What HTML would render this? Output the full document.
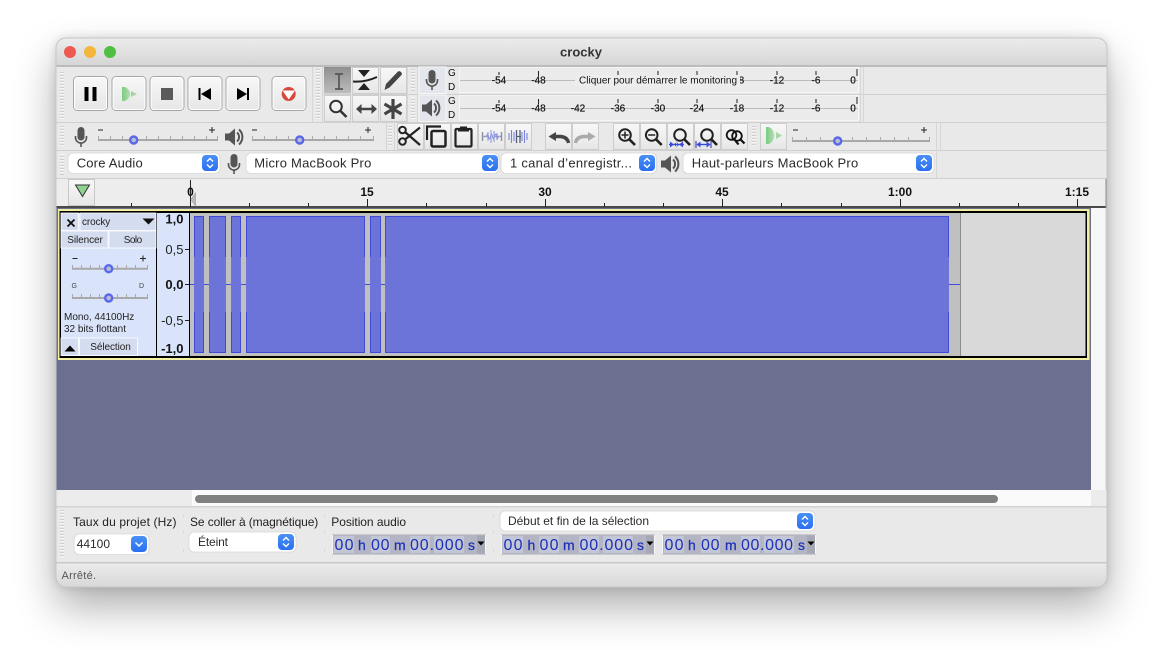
<!DOCTYPE html>
<html lang="fr"><head><meta charset="utf-8"><title>crocky</title>
<style>
html,body{margin:0;padding:0;background:#fff;width:1163px;height:661px;overflow:hidden}
#sh{position:absolute;left:56px;top:38px;width:1051px;height:549px;border-radius:10px;box-shadow:0 20px 42px rgba(0,0,0,.32),0 0 10px rgba(0,0,0,.14)}
svg{position:absolute;left:0;top:0}
text{font-family:"Liberation Sans",sans-serif;fill:#222}
.c{font-size:13px;fill:#2a2a2a}
.c2{font-size:12px;fill:#2a2a2a}
.l{font-size:12px;fill:#222}
.m{font-size:10px;fill:#111;text-anchor:middle;stroke:#111;stroke-width:.2}
.r{font-size:12px;font-weight:bold;fill:#111;text-anchor:middle}
.t{font-size:10px;fill:#222}
.d{font-size:16px;fill:#1c2fb8}
.u{font-size:14px;fill:#1c2fb8;stroke:#1c2fb8;stroke-width:.25}
</style></head><body>
<div id="sh"></div>
<svg width="1163" height="661" viewBox="0 0 1163 661" xmlns="http://www.w3.org/2000/svg">
<defs>
<clipPath id="win"><rect x="56" y="38" width="1051" height="549" rx="10"/></clipPath>
<linearGradient id="tb" x1="0" y1="0" x2="0" y2="1"><stop offset="0" stop-color="#ececec"/><stop offset="1" stop-color="#d5d5d5"/></linearGradient>
<linearGradient id="st" x1="0" y1="0" x2="0" y2="1"><stop offset="0" stop-color="#ececec"/><stop offset="1" stop-color="#d8d8d8"/></linearGradient>
<linearGradient id="btn" x1="0" y1="0" x2="0" y2="1"><stop offset="0" stop-color="#f8f8f8"/><stop offset="1" stop-color="#e6e6e6"/></linearGradient>
<linearGradient id="sel" x1="0" y1="0" x2="0" y2="1"><stop offset="0" stop-color="#8f8f8f"/><stop offset="1" stop-color="#bdbdbd"/></linearGradient>
<linearGradient id="blu" x1="0" y1="0" x2="0" y2="1"><stop offset="0" stop-color="#4a90f5"/><stop offset="1" stop-color="#2a6ff0"/></linearGradient>
<linearGradient id="grn" x1="0" y1="0" x2="1" y2="0"><stop offset="0" stop-color="#7ccb80"/><stop offset="1" stop-color="#b4deb4"/></linearGradient>
<pattern id="grip" width="4" height="3" patternUnits="userSpaceOnUse"><rect width="4" height="1" fill="#cfcfcf"/><rect y="1" width="4" height="1" fill="#f6f6f6"/></pattern>
<g id="tbig"><rect x=".5" y=".5" width="34" height="34" rx="4" fill="url(#btn)" stroke="#a6a6a6"/><rect x="1.5" y="1.5" width="32" height="32" rx="3" fill="none" stroke="#fff"/></g>
<g id="tool"><rect x=".5" y=".5" width="26" height="26" fill="url(#btn)" stroke="#cdcdcd"/></g>
<g id="mic" fill="none" stroke="#555"><rect x="-3.5" y="-10" width="7" height="13.5" rx="3.5" fill="#555" stroke="none"/><path d="M-5.500 -1v1.500a5.500 5.500 0 0 0 11 0v-1.500M0 6v4" stroke-width="1.600"/></g>
<g id="spk"><path d="M-9 -3.500h4l6 -5v17l-6 -5h-4z" fill="#555"/><path d="M3 -4.500a6 6 0 0 1 0 9M5 -7.500a10 10 0 0 1 0 15" fill="none" stroke="#555" stroke-width="2"/></g>
<g id="step"><rect width="16" height="16" rx="4" fill="url(#blu)"/><path d="M5 6.500l3 -3 3 3M5 9.500l3 3 3 -3" fill="none" stroke="#fff" stroke-width="1.400"/></g>
<g id="thumb"><circle r="3.500" fill="#b9bcd8" stroke="#5868e8" stroke-width="2.400"/></g>
<g id="lens"><circle cx="0" cy="0" r="5.800" fill="none" stroke="#222" stroke-width="2"/><path d="M4.200 4.200L10 10" stroke="#222" stroke-width="2.600"/></g>
<g id="mtr"><rect x="459.500" y="0.500" width="399" height="25" fill="#ebebeb" stroke="#f5f5f5"/><path d="M460 13.500H858" stroke="#bcbcbc"/><path d="M499 5v3M538.500 4v5M618 4v4M658 4v4M697 4v4M737 4v4M777 4v4M816 4v4M857 2v7" stroke="#222"/></g>
<g id="arr"><path d="M0 0h7l-3.500 4z" fill="#000"/></g>
</defs>

<g clip-path="url(#win)">
<rect x="56" y="38" width="1051" height="549" fill="#e9e9e9"/>
<!-- title -->
<rect x="56" y="38" width="1051" height="28" fill="url(#tb)"/>
<rect x="56" y="65" width="1051" height="2" fill="#bcbcbc"/>
<circle cx="70" cy="52" r="6" fill="#ee5a52"/><circle cx="90" cy="52" r="6" fill="#f5b63c"/><circle cx="110" cy="52" r="6" fill="#4fc041"/>
<text x="581" y="56.500" text-anchor="middle" style="font-size:13px;font-weight:bold;fill:#333">crocky</text>

<!-- toolbar lines -->
<path d="M56 122.500H1107M56 150.500H1107M56 178.500H1107M322 94.500H1107" stroke="#d0d0d0"/>
<path d="M312.500 67V122M322.500 67V122M407.500 67V122M417.500 67V122M858.500 67V122M860.500 67V122M863.500 67V122M386.500 123V150M394.500 123V150M936.500 123V178M940.500 123V150" stroke="#d6d6d6"/>
<rect x="60" y="71" width="4" height="48" fill="url(#grip)"/>
<rect x="316" y="69" width="4" height="51" fill="url(#grip)"/>
<rect x="411" y="69" width="4" height="22" fill="url(#grip)"/>
<rect x="411" y="97" width="4" height="22" fill="url(#grip)"/>
<rect x="60" y="126" width="4" height="21" fill="url(#grip)"/>
<rect x="60" y="154" width="4" height="21" fill="url(#grip)"/>
<rect x="388" y="126" width="4" height="21" fill="url(#grip)"/>
<rect x="752" y="126" width="4" height="21" fill="url(#grip)"/>

<!-- transport -->
<use href="#tbig" x="73" y="76"/><use href="#tbig" x="111.500" y="76"/><use href="#tbig" x="149.500" y="76"/><use href="#tbig" x="187.500" y="76"/><use href="#tbig" x="225.500" y="76"/><use href="#tbig" x="271.500" y="76"/>
<path d="M84.500 87h4v14h-4zM92.500 87h4v14h-4z" fill="#000"/>
<path d="M122 87h2.500q4.500 1 6 7q-1.500 6 -6 7h-2.500z" fill="url(#grn)"/><path d="M131 91l6 3l-6 3z" fill="#a6d6a6"/>
<rect x="161" y="88" width="12" height="12" fill="#5a5a5a"/>
<path d="M198.500 88h2v12h-2zM211 88v12l-10 -6z" fill="#000"/>
<path d="M247 88h2v12h-2zM237 88v12l10 -6z" fill="#000"/>
<circle cx="288.700" cy="94" r="7" fill="#d6493c"/><path d="M282.500 90.500h12.500l-6.250 9z" fill="#fff"/>

<!-- tools -->
<rect x="324" y="67" width="27" height="26.500" fill="url(#sel)"/>
<use href="#tool" x="352" y="67"/><use href="#tool" x="380" y="67"/><use href="#tool" x="324" y="95"/><use href="#tool" x="352" y="95"/><use href="#tool" x="380" y="95"/>
<path d="M335 74h8M339 74v15M335 89h8" fill="none" stroke="#555" stroke-width="1.700"/>
<path d="M358 70h12l-6 7zM358 90h12l-6 -7z" fill="#222"/><path d="M353 81.500q12 1 24 -4.500" fill="none" stroke="#222" stroke-width="2"/>
<path d="M384.500 90l1.500 -6 12 -12.500q1.500 -1 3 .5t.5 3l-12 12.500z" fill="#444"/>
<circle cx="336" cy="106.500" r="5.800" fill="none" stroke="#333" stroke-width="2"/><path d="M340.500 111l6 6" stroke="#333" stroke-width="2.600"/>
<path d="M358 109h17" stroke="#444" stroke-width="2.400"/><path d="M356 109l5.500 -5v10zM377 109l-5.500 -5v10z" fill="#444"/>
<path d="M393 99v20M384.500 104l17 10M384.500 114l17 -10" stroke="#444" stroke-width="3.200"/>

<!-- meters -->
<rect x="419" y="67" width="27" height="26.500" fill="#e3e6ec" stroke="#f6f6f6"/>
<rect x="419" y="95" width="27" height="26.500" fill="#e3e6ec" stroke="#f6f6f6"/>
<use href="#mic" x="432" y="80"/><use href="#spk" x="431" y="108"/>
<text x="448" y="76" class="t" style="fill:#111">G</text><text x="448" y="90" class="t" style="fill:#111">D</text>
<text x="448" y="104" class="t" style="fill:#111">G</text><text x="448" y="118" class="t" style="fill:#111">D</text>
<use href="#mtr" y="67"/><use href="#mtr" y="95"/>
<g>
<text x="499" y="83.500" class="m">-54</text><text x="538.500" y="83.500" class="m">-48</text><text x="737" y="83.500" class="m">-18</text><text x="777" y="83.500" class="m">-12</text><text x="816" y="83.500" class="m">-6</text><text x="853" y="83.500" class="m">0</text>
<rect x="575" y="75" width="165" height="11" fill="#ededed"/>
<text x="579" y="83.500" class="t" style="fill:#111" textLength="158" lengthAdjust="spacing">Cliquer pour démarrer le monitoring</text>
<text x="499" y="111.500" class="m">-54</text><text x="538.500" y="111.500" class="m">-48</text><text x="578" y="111.500" class="m">-42</text><text x="618" y="111.500" class="m">-36</text><text x="658" y="111.500" class="m">-30</text><text x="697" y="111.500" class="m">-24</text><text x="737" y="111.500" class="m">-18</text><text x="777" y="111.500" class="m">-12</text><text x="816" y="111.500" class="m">-6</text><text x="853" y="111.500" class="m">0</text>
</g>

<!-- row 2: sliders -->
<use href="#mic" x="81" y="137"/>
<path d="M98 140h120M252 140h122M792 141h138" stroke="#a8a8a8" stroke-width="2"/>
<path d="M98.500 136v3M110.500 136v3M122.500 136v3M146.500 136v3M158.500 136v3M170.500 136v3M182.500 136v3M194.500 136v3M206.500 136v3M217.500 136v3M252.500 136v3M264.500 136v3M276.500 136v3M288.500 136v3M312.500 136v3M324.500 136v3M336.500 136v3M348.500 136v3M360.500 136v3M373.500 136v3M792.500 137v3M806.500 137v3M820.500 137v3M852.500 137v3M866.500 137v3M880.500 137v3M894.500 137v3M908.500 137v3M929.500 137v3" stroke="#aaa"/>
<path d="M98 130h5M209 130h6M212 127v6M252 130h5M365 130h6M368 127v6M793 130h5M921 130h6M924 127v6" stroke="#222"/>
<use href="#thumb" x="133.700" y="140"/><use href="#thumb" x="299.700" y="140"/><use href="#thumb" x="837.700" y="141"/>
<use href="#spk" x="234" y="137"/>

<!-- edit tools -->
<use href="#tool" x="397" y="123"/><use href="#tool" x="424" y="123"/><use href="#tool" x="451" y="123"/><use href="#tool" x="478" y="123"/><use href="#tool" x="505" y="123"/>
<use href="#tool" x="545" y="123"/><use href="#tool" x="572" y="123"/>
<use href="#tool" x="613" y="123"/><use href="#tool" x="640" y="123"/><use href="#tool" x="667" y="123"/><use href="#tool" x="694" y="123"/><use href="#tool" x="721" y="123"/><use href="#tool" x="760" y="123"/>
<circle cx="402.500" cy="130" r="3.300" fill="none" stroke="#222" stroke-width="2"/><circle cx="402.500" cy="141.500" r="3.300" fill="none" stroke="#222" stroke-width="2"/><path d="M405 132l15 13M405 139.500l15 -12" stroke="#222" stroke-width="2.200"/>
<path d="M427 140v-13.500h14" fill="none" stroke="#222" stroke-width="2.200"/><rect x="431.500" y="131" width="14" height="15.500" rx="1.500" fill="none" stroke="#222" stroke-width="2.500"/>
<rect x="455.500" y="129" width="16" height="17.500" rx="1" fill="none" stroke="#222" stroke-width="2.200"/><path d="M460 126.500h7v2.500h2v2.500h-11v-2.500h2z" fill="#222"/>
<path d="M482 136.500h7M495 136.500h7" stroke="#9a9fbc" stroke-width="1.400"/><path d="M482.500 132v9M501.500 132v9" stroke="#8d91a6" stroke-width="1.400"/><path d="M486.500 136.500q1 -5 2 0t2 0 2 0 2 0 2 0t1.500 0M488 132v9M491 130v13M494 131v11M497 133v7" fill="none" stroke="#8b93dc" stroke-width="1"/>
<path d="M509 133v7M511.500 130v13M514 132v9M522 132v9M524.500 130v13M527 133v7" stroke="#7882e4" stroke-width="1.100"/><path d="M516.500 130v13M520 130v13" stroke="#555c78" stroke-width="1.300"/><path d="M516 136.500h5" stroke="#555c78" stroke-width="1.200"/>
<path d="M568.500 143q-1 -6 -8 -6.500h-5" fill="none" stroke="#444" stroke-width="3.400"/><path d="M548.500 136.500l7.500 -4.500v9z" fill="#444"/>
<path d="M575.500 143q1 -6 8 -6.500h5" fill="none" stroke="#aaa" stroke-width="3.400"/><path d="M595.500 136.500l-7.500 -4.500v9z" fill="#aaa"/>
<use href="#lens" x="625" y="135"/><path d="M621.500 135h7M625 131.500v7" stroke="#222" stroke-width="1.500"/>
<use href="#lens" x="651.700" y="135"/><path d="M648.200 135h7" stroke="#222" stroke-width="1.500"/>
<use href="#lens" x="680" y="135"/><path d="M669 144.500h15" stroke="#3a4ad8" stroke-width="1.400"/><path d="M674 144.500l-4 -3v6zM679 144.500l4 -3v6zM674 144.500l3 -3v6zM679 144.500l-3 -3v6z" fill="#3a4ad8"/>
<use href="#lens" x="707" y="135"/><path d="M697 144.500h13" stroke="#3a4ad8" stroke-width="1.400"/><path d="M696 141v7M711 141v7" stroke="#3a4ad8" stroke-width="1.200"/><path d="M696.500 144.500l4 -3v6zM710.500 144.500l-4 -3v6z" fill="#3a4ad8"/>
<circle cx="731.500" cy="135" r="4.800" fill="none" stroke="#111" stroke-width="1.800"/><circle cx="737" cy="136" r="4.800" fill="none" stroke="#111" stroke-width="1.800"/><path d="M734.500 139.500l4 5M740.500 139.500l4 4" stroke="#111" stroke-width="2.200"/>
<path d="M766 127h2.500q4.500 1 6 8.500q-1.500 7.500 -6 8.500h-2.500z" fill="url(#grn)"/><path d="M776 132l6 3.500l-6 3.500z" fill="#a6d6a6"/>

<!-- row 3 combos -->
<g fill="#fff" stroke="#d6d6d6" stroke-width=".8">
<rect x="68" y="153" width="152" height="20.500" rx="5"/>
<rect x="246" y="153" width="253" height="20.500" rx="5"/>
<rect x="501" y="153" width="155.500" height="20.500" rx="5"/>
<rect x="683" y="153" width="251" height="20.500" rx="5"/>
<rect x="500" y="511" width="315" height="20" rx="5"/>
<rect x="74" y="534" width="75" height="20.500" rx="5"/>
<rect x="189" y="532" width="107" height="20" rx="5"/>
</g>
<use href="#step" x="202" y="155"/><use href="#step" x="482" y="155"/><use href="#step" x="639" y="155"/><use href="#step" x="916" y="155"/><use href="#step" x="797" y="513"/><use href="#step" x="278" y="534"/>
<rect x="131" y="536" width="16" height="16" rx="4" fill="url(#blu)"/><path d="M135.500 542.500l3.500 3.500 3.500 -3.500" fill="none" stroke="#fff" stroke-width="1.500"/>
<text x="76.700" y="167.500" class="c" textLength="66" lengthAdjust="spacing">Core Audio</text>
<text x="254.300" y="167.500" class="c" textLength="117" lengthAdjust="spacing">Micro MacBook Pro</text>
<text x="510" y="167.500" class="c" textLength="122" lengthAdjust="spacing">1 canal d’enregistr...</text>
<text x="691.700" y="167.500" class="c" textLength="166.500" lengthAdjust="spacing">Haut-parleurs MacBook Pro</text>
<use href="#mic" x="234" y="164"/><use href="#spk" x="670" y="164"/>

<!-- ruler -->
<rect x="56" y="179" width="1050" height="28" fill="#ededed"/>
<rect x="56" y="206" width="1050" height="2" fill="#4a4a4a"/>
<rect x="1105.500" y="179" width="1.500" height="29" fill="#8a8a8a"/>
<rect x="68.500" y="179.500" width="26" height="26" fill="url(#btn)" stroke="#c8c8c8"/>
<path d="M75.500 185h14l-7 11.500z" fill="#8fd08f" stroke="#333" stroke-width="1"/>
<path d="M190.500 180v27M131.500 203v4M249.500 203v4M308.500 203v4M367.500 199v8M426.500 203v4M486.500 203v4M545.500 199v8M604.500 203v4M663.500 203v4M722.500 199v8M781.500 203v4M841.500 203v4M900.500 199v8M959.500 203v4M1018.500 203v4M1077.500 199v8" stroke="#222"/>
<path d="M195.500 193v13l-4.500 -6.500z" fill="#bbb" stroke="#999" stroke-width=".6"/>
<text x="190.500" y="196" class="r">0</text><text x="367" y="196" class="r">15</text><text x="545" y="196" class="r">30</text><text x="722" y="196" class="r">45</text><text x="900" y="196" class="r">1:00</text><text x="1077" y="196" class="r">1:15</text>

<!-- track area -->
<rect x="56" y="208" width="1035" height="282" fill="#6b7090"/>
<rect x="1091" y="208" width="16" height="282" fill="#f7f7f7"/>
<rect x="1105.500" y="208" width="1.500" height="282" fill="#d0d0d0"/>
<rect x="58" y="209" width="1031.500" height="151" fill="#f4f0a2"/>
<rect x="59.500" y="211" width="1027.500" height="147" fill="#000"/>
<!-- control panel -->
<rect x="61" y="213" width="95" height="143" fill="#d9e3fa"/>
<g fill="#d4dcef" stroke="#fff" stroke-width=".8">
<rect x="61" y="213" width="17.500" height="17.500"/><rect x="80" y="213" width="76" height="17.500"/>
<rect x="61" y="231" width="47" height="17"/><rect x="109" y="231" width="47" height="17"/>
<rect x="61" y="338" width="17.500" height="17.500"/><rect x="79.500" y="338" width="58" height="17.500"/>
</g>
<path d="M67.500 219.500l7 7M74.500 219.500l-7 7" stroke="#111" stroke-width="1.800"/>
<path d="M142.500 218.500h12l-6 6z" fill="#111"/>
<path d="M64.500 351.500h11l-5.500 -6z" fill="#000"/>
<text x="82" y="225" class="t" textLength="28.300" lengthAdjust="spacing">crocky</text>
<text x="67.300" y="243" class="t" textLength="35.500" lengthAdjust="spacing">Silencer</text>
<text x="123.700" y="243" class="t" textLength="18.500" lengthAdjust="spacing">Solo</text>
<text x="90.300" y="350" class="t" textLength="40.500" lengthAdjust="spacing">Sélection</text>
<text x="64" y="320" class="t" textLength="70.300" lengthAdjust="spacing">Mono, 44100Hz</text>
<text x="64" y="332" class="t" textLength="62" lengthAdjust="spacing">32 bits flottant</text>
<path d="M72 268.700h76M72 298h76" stroke="#a8a8a8" stroke-width="2"/>
<path d="M72.500 265v3M81.500 265v3M90.500 265v3M99.500 265v3M117.500 265v3M126.500 265v3M135.500 265v3M147.500 265v3M72.500 294v3M81.500 294v3M90.500 294v3M99.500 294v3M117.500 294v3M126.500 294v3M135.500 294v3M147.500 294v3" stroke="#aaa"/>
<path d="M72.500 258.500h5M140 258.500h6M143 255.500v6" stroke="#222"/>
<use href="#thumb" x="108.700" y="268.700"/><use href="#thumb" x="108.700" y="298"/>
<text x="71.500" y="288" style="font-size:7px;fill:#444">G</text><text x="139" y="288" style="font-size:7px;fill:#444">D</text>
<!-- vertical ruler -->
<rect x="157" y="213" width="32" height="143" fill="#d9e3fa"/>
<text x="183.500" y="223.500" text-anchor="end" style="font-size:13px;font-weight:bold;fill:#111">1,0</text>
<text x="183.500" y="254" text-anchor="end" style="font-size:13px;fill:#222">0,5</text>
<text x="183.500" y="289" text-anchor="end" style="font-size:13px;font-weight:bold;fill:#111">0,0</text>
<text x="183.500" y="325" text-anchor="end" style="font-size:13px;fill:#222">-0,5</text>
<text x="183.500" y="353" text-anchor="end" style="font-size:13px;font-weight:bold;fill:#111">-1,0</text>
<path d="M185 249.500h4M185 284.500h4M185 320.500h4" stroke="#222"/>
<!-- waveform -->
<rect x="190" y="213" width="770" height="143" fill="#c0c0c0"/>
<rect x="961" y="213" width="124.500" height="143" fill="#d9d9d9"/>
<rect x="960" y="213" width="1" height="143" fill="#8c8c8c"/>
<path d="M190 284.500H960" stroke="#3f4fdc"/>
<g fill="#6c73d9">
<rect x="194" y="216" width="10" height="137"/><rect x="209" y="216" width="17" height="137"/><rect x="231" y="216" width="10" height="137"/><rect x="246" y="216" width="119" height="137"/><rect x="370" y="216" width="11" height="137"/><rect x="385" y="216" width="564" height="137"/>
</g>
<path d="M194 216.500h10M209 216.500h17M231 216.500h10M246 216.500h119M370 216.500h11M385 216.500h564M194 352.500h10M209 352.500h17M231 352.500h10M246 352.500h119M370 352.500h11M385 352.500h564M194.500 216v41M194.500 312v41M203.500 216v41M203.500 312v41M209.500 216v41M209.500 312v41M225.500 216v41M225.500 312v41M231.500 216v41M231.500 312v41M240.500 216v41M240.500 312v41M246.500 216v41M246.500 312v41M364.500 216v41M364.500 312v41M370.500 216v41M370.500 312v41M380.500 216v41M380.500 312v41M385.500 216v41M385.500 312v41M948.500 216v41M948.500 312v41" stroke="#3f4ad8" fill="none"/>

<!-- scrollbar -->
<rect x="56" y="490" width="136" height="16" fill="#ececec"/>
<rect x="192" y="490" width="899" height="16" fill="#fafafa"/>
<rect x="1091" y="490" width="16" height="16" fill="#ececec"/>
<rect x="195" y="495" width="803" height="8" rx="4" fill="#808080"/>
<!-- bottom -->
<rect x="56" y="506" width="1051" height="1.500" fill="#d2d2d2"/>
<rect x="60" y="510" width="4" height="48" fill="url(#grip)"/>
<text x="73" y="526" class="l" textLength="103.500" lengthAdjust="spacing">Taux du projet (Hz)</text>
<text x="190" y="526" class="l" textLength="128.300" lengthAdjust="spacing">Se coller à (magnétique)</text>
<text x="331.300" y="526" class="l" textLength="74.700" lengthAdjust="spacing">Position audio</text>
<text x="76.700" y="548" class="c2" textLength="33.300" lengthAdjust="spacing">44100</text>
<text x="198" y="546" class="c2" textLength="30" lengthAdjust="spacing">Éteint</text>
<text x="508" y="525" class="c2" textLength="141" lengthAdjust="spacing">Début et fin de la sélection</text>
<path d="M183.500 515v3M183.500 530v3M183.500 549v3M324.500 515v3M324.500 530v3M324.500 549v3M493.500 515v3M493.500 530v3M493.500 549v3" stroke="#d8d8d8"/>

<!-- time fields -->
<g fill="#b3b5c4" stroke="#f7f7f7"><rect x="332.500" y="534.500" width="153" height="20"/><rect x="501.500" y="534.500" width="153" height="20"/><rect x="662.500" y="534.500" width="153" height="20"/></g>
<path d="M332 534.500H486M332 554.500H486M501 534.500H655M501 554.500H655M662 534.500H816M662 554.500H816" stroke="#9d9d9d" stroke-width=".6"/>
<g fill="#c3c6d5">
<rect x="334" y="536" width="20" height="17"/><rect x="371" y="536" width="19" height="17"/><rect x="410" y="536" width="20" height="17"/><rect x="434" y="536" width="30" height="17"/>
<rect x="503" y="536" width="20" height="17"/><rect x="539" y="536" width="20" height="17"/><rect x="579" y="536" width="20" height="17"/><rect x="603" y="536" width="30" height="17"/>
<rect x="664" y="536" width="20" height="17"/><rect x="701" y="536" width="19" height="17"/><rect x="741" y="536" width="19" height="17"/><rect x="764" y="536" width="30" height="17"/>
</g>
<text x="334.500" y="550" class="d" textLength="19" lengthAdjust="spacing">00</text><text x="358" y="550" class="u" textLength="8" lengthAdjust="spacing">h</text><text x="371" y="550" class="d" textLength="18.500" lengthAdjust="spacing">00</text><text x="394" y="550" class="u" textLength="12" lengthAdjust="spacing">m</text><text x="410" y="550" class="d" textLength="53.500" lengthAdjust="spacing">00.000</text><text x="468" y="550" class="u" textLength="6.500" lengthAdjust="spacing">s</text>
<text x="503.500" y="550" class="d" textLength="19" lengthAdjust="spacing">00</text><text x="527.500" y="550" class="u" textLength="7" lengthAdjust="spacing">h</text><text x="539.500" y="550" class="d" textLength="19" lengthAdjust="spacing">00</text><text x="563" y="550" class="u" textLength="12" lengthAdjust="spacing">m</text><text x="579.500" y="550" class="d" textLength="53.500" lengthAdjust="spacing">00.000</text><text x="637" y="550" class="u" textLength="6.500" lengthAdjust="spacing">s</text>
<text x="664.500" y="550" class="d" textLength="19" lengthAdjust="spacing">00</text><text x="688" y="550" class="u" textLength="7" lengthAdjust="spacing">h</text><text x="701" y="550" class="d" textLength="18.500" lengthAdjust="spacing">00</text><text x="725" y="550" class="u" textLength="11.500" lengthAdjust="spacing">m</text><text x="741" y="550" class="d" textLength="52" lengthAdjust="spacing">00.000</text><text x="798" y="550" class="u" textLength="6.500" lengthAdjust="spacing">s</text>
<g fill="#a6a8b4"><rect x="477" y="535.500" width="8" height="18"/><rect x="646" y="535.500" width="8" height="18"/><rect x="807" y="535.500" width="8" height="18"/></g>
<use href="#arr" x="477.500" y="541.500"/><use href="#arr" x="646.500" y="541.500"/><use href="#arr" x="807.500" y="541.500"/>

<!-- status -->
<rect x="56" y="562" width="1051" height="25" fill="url(#st)"/>
<rect x="56" y="562" width="1051" height="1.500" fill="#c8c8c8"/>
<text x="61.500" y="579" style="font-size:11px;fill:#555" textLength="34.500" lengthAdjust="spacing">Arrêté.</text>
</g>
<rect x="56" y="38" width="1051" height="549" rx="10" fill="none" stroke="#c6c6c6" stroke-width="1"/>
</svg>
</body></html>
